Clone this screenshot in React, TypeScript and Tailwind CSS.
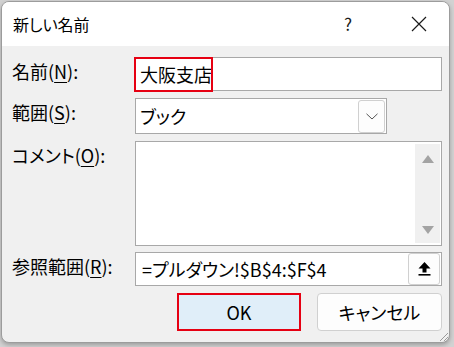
import React from 'react'

const font = "font-['Noto_Sans_CJK_JP',sans-serif] [font-feature-settings:'palt']"

function Label({ text, k }: { text: string; k: string }) {
  return (
    <div className="w-[123px] shrink-0 pt-[2px] text-[18px] leading-[24px] text-black">
      {text}(<span className="underline underline-offset-[3px] decoration-1">{k}</span>):
    </div>
  )
}

export default function App() {
  return (
    <div className={`w-[454px] h-[347px] overflow-hidden bg-[#d2d2d2] pl-[1px] pt-[1px] ${font}`}>
      <div className="relative flex h-[342px] w-[449px] flex-col overflow-hidden rounded-[8px] border border-[#9c9c9c] bg-[#f0f0f0] shadow-[0_2px_4px_rgba(0,0,0,0.25)]">
        {/* title bar */}
        <div className="flex h-[44px] shrink-0 items-center bg-white pl-[11px] pr-[7px]">
          <span className="text-[16px] leading-none text-black">新しい名前</span>
          <div className="ml-auto flex h-full w-[46px] items-center justify-center text-[17px] text-[#1a1a1a]">?</div>
          <div className="ml-[25px] flex h-full w-[46px] items-center justify-center">
            <svg width="16" height="16" viewBox="0 0 16 16">
              <path d="M1 1 L15 15 M15 1 L1 15" stroke="#1a1a1a" strokeWidth="1.2" fill="none" />
            </svg>
          </div>
        </div>

        {/* body */}
        <div className="flex flex-col pl-[10px] pr-[7px] pt-[11px]">
          <div className="flex h-[34px]">
            <Label text="名前" k="N" />
            <div className="relative flex flex-1 items-center border border-[#a8a8a8] bg-white pl-[4px] text-[18px] text-black">
              大阪支店
              <div className="absolute -left-[2px] -top-[1px] h-[35px] w-[79px] border-2 border-[#e60012]" />
            </div>
          </div>

          <div className="mt-[7px] flex h-[36px]">
            <Label text="範囲" k="S" />
            <div className="flex w-[252px] items-center border border-[#a8a8a8] bg-white pl-[4px] text-[18px] text-black">
              <span className="flex-1">ブック</span>
              <div className="mr-[1px] flex h-[33px] w-[27px] items-center justify-center rounded-[3px] border border-[#d0d0d0] bg-[#fdfdfd]">
                <svg width="12" height="7" viewBox="0 0 12 7">
                  <path d="M0.5 0.8 L6 6 L11.5 0.8" stroke="#555" strokeWidth="1" fill="none" />
                </svg>
              </div>
            </div>
          </div>

          <div className="mt-[7px] flex h-[105px]">
            <Label text="コメント" k="O" />
            <div className="flex flex-1 justify-end border border-[#a8a8a8] bg-white py-[2px] pr-[1px]">
              <div className="flex w-[25px] flex-col items-center justify-between bg-[#f0f0f0] pt-[11px] pb-[9px]">
                <svg width="12" height="8" viewBox="0 0 12 8">
                  <path d="M6 0 L12 8 L0 8 Z" fill="#a3a3a3" />
                </svg>
                <svg width="12" height="8" viewBox="0 0 12 8">
                  <path d="M0 0 L12 0 L6 8 Z" fill="#a3a3a3" />
                </svg>
              </div>
            </div>
          </div>

          <div className="mt-[6px] flex h-[34px]">
            <Label text="参照範囲" k="R" />
            <div className="flex flex-1 items-center border border-[#a8a8a8] bg-white pl-[6px] text-[18px] text-black">
              <span className="flex-1">=プルダウン!$B$4:$F$4</span>
              <div className="mr-[1px] flex h-[32px] w-[32px] items-center justify-center rounded-[3px] border border-[#d0d0d0] bg-[#fdfdfd]">
                <svg width="13" height="14" viewBox="0 0 13 14">
                  <path d="M6.5 0 L12.5 6.5 L8.5 6.5 L8.5 10.5 L4.5 10.5 L4.5 6.5 L0.5 6.5 Z" fill="#000" />
                  <rect x="0.5" y="12" width="12" height="1.6" fill="#000" />
                </svg>
              </div>
            </div>
          </div>

          <div className="mt-[7px] flex h-[38px] justify-end gap-[16px]">
            <div className="flex w-[124px] items-center justify-center border-2 border-[#e60012] bg-[#e0eef9] text-[18px] text-black">
              OK
            </div>
            <div className="flex w-[125px] items-center justify-center rounded-[4px] border border-[#d0d0d0] bg-[#fdfdfd] text-[18px] text-black">
              キャンセル
            </div>
          </div>
        </div>

        {/* resize grip */}
        <svg className="absolute bottom-0 right-0" width="12" height="12" viewBox="0 0 12 12">
          <path d="M11 3 L3 11 M11 7 L7 11" stroke="#9a9a9a" strokeWidth="1" fill="none" />
        </svg>
      </div>
    </div>
  )
}
